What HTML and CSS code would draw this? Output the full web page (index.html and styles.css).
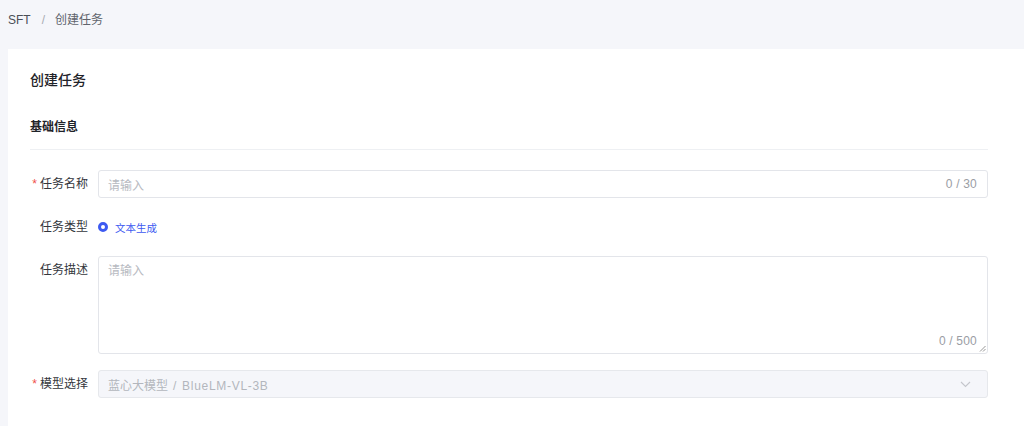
FILE: index.html
```html
<!DOCTYPE html>
<html lang="zh">
<head>
<meta charset="utf-8">
<title>创建任务</title>
<link rel="stylesheet" href="styles.css">
</head>
<body>
<div class="crumbs">
  <span class="crumb-root">SFT</span>
  <span class="crumb-sep">/</span>
  <span class="crumb-cur">创建任务</span>
</div>
<main class="card">
  <h1 class="title">创建任务</h1>
  <h2 class="section">基础信息</h2>
  <form class="form">
    <div class="row">
      <label class="label"><span class="req">*</span>任务名称</label>
      <div class="control input">
        <span class="ph">请输入</span>
        <span class="count">0 / 30</span>
      </div>
    </div>
    <div class="row row-radio">
      <label class="label">任务类型</label>
      <div class="radio">
        <span class="dot"></span>
        <span class="radio-text">文本生成</span>
      </div>
    </div>
    <div class="row row-top">
      <label class="label">任务描述</label>
      <div class="control textarea">
        <span class="ph">请输入</span>
        <span class="count count-bottom">0 / 500</span>
        <svg class="grip" width="7" height="7" viewBox="0 0 7 7"><path d="M6.5 1 L1 6.5 M6.5 4 L4 6.5" stroke="#8a8a8a" stroke-width="0.9" fill="none"/></svg>
      </div>
    </div>
    <div class="row">
      <label class="label"><span class="req">*</span>模型选择</label>
      <div class="control select">
        <span class="ph">蓝心大模型<span class="latin"> / BlueLM-VL-3B</span></span>
        <svg class="arrow" width="11" height="7" viewBox="0 0 11 7"><path d="M1 1 L5.5 5.5 L10 1" stroke="#c4c6cc" stroke-width="1.1" fill="none"/></svg>
      </div>
    </div>
  </form>
</main>
</body>
</html>
```

FILE: styles.css
```css
html, body {
  margin: 0;
  padding: 0;
}
body {
  background: #f5f6fa;
  font-family: "Liberation Sans", "Noto Sans CJK SC", sans-serif;
  font-size: 12px;
  color: #1f2329;
  overflow: hidden;
  height: 426px;
}
.crumbs {
  height: 49px;
  box-sizing: border-box;
  padding: 10px 8px 0;
  line-height: 20px;
  display: flex;
}
.crumb-root { color: #4b4f57; }
.crumb-sep { color: #a8abb2; margin: 0 10px 0 11px; }
.crumb-cur { color: #60646c; }
.card {
  margin-left: 8px;
  background: #fff;
  padding: 20px 36px 40px 22px;
  min-height: 377px;
  box-sizing: border-box;
}
.title {
  margin: 0;
  font-size: 14px;
  line-height: 22px;
  font-weight: 500;
  color: #1f2329;
}
.section {
  margin: 26px 0 0;
  font-size: 12px;
  line-height: 20px;
  font-weight: 700;
  color: #1f2329;
  padding-bottom: 12px;
  border-bottom: 1px solid #eef0f3;
}
.form {
  display: flex;
  flex-direction: column;
  gap: 16px;
  padding-top: 20px;
}
.row {
  display: flex;
  align-items: center;
  gap: 10px;
}
.row-top { align-items: flex-start; }
.row-radio { height: 26px; }
.label {
  width: 58px;
  flex: none;
  text-align: right;
  line-height: 28px;
  color: #33363c;
  white-space: nowrap;
}
.req {
  color: #f0504a;
  margin-right: 3px;
}
.control {
  flex: 1;
  box-sizing: border-box;
  border: 1px solid #e3e5ea;
  border-radius: 3px;
  background: #fff;
  display: flex;
  align-items: center;
  padding: 0 10px 0 9px;
  position: relative;
}
.input { height: 28px; }
.ph { color: #b7bac1; flex: 1; }
.count { color: #9a9da4; letter-spacing: 0.2px; }
.textarea {
  height: 98px;
  align-items: flex-start;
  padding-top: 4px;
  line-height: 20px;
}
.count-bottom {
  position: absolute;
  right: 10px;
  bottom: 2px;
  line-height: 20px;
}
.grip {
  position: absolute;
  right: 1px;
  bottom: 1px;
}
.select {
  height: 28px;
  background: #f5f6fa;
  border-color: #e6e8ec;
}
.select .ph { color: #b3b6bd; }
.latin { letter-spacing: 0.7px; word-spacing: 1px; }
.arrow { margin-right: 6px; }
.radio {
  display: flex;
  align-items: center;
  gap: 7px;
}
.dot {
  width: 10px;
  height: 10px;
  box-sizing: border-box;
  border-radius: 50%;
  border: 3px solid #3d5af1;
  background: #fff;
}
.radio-text {
  color: #3d5af1;
  font-size: 10.5px;
}
```
